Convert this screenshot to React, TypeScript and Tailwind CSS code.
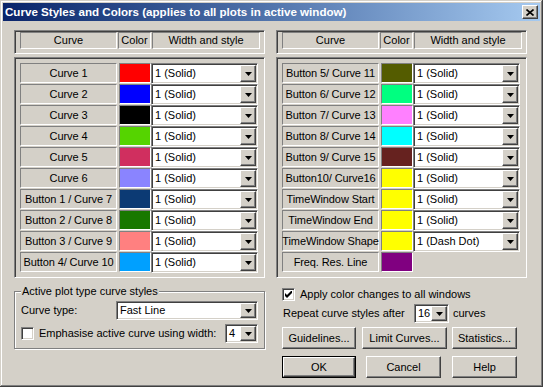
import React from 'react';

const sunken2 =
  'border border-t-[#808080] border-l-[#808080] border-b-white border-r-white shadow-[inset_1px_1px_0_#404040,inset_-1px_-1px_0_#d4d0c8]';
const sunken1 = 'border border-t-[#808080] border-l-[#808080] border-b-white border-r-white';
const raised =
  'border border-t-white border-l-white border-b-[#404040] border-r-[#404040] shadow-[inset_-1px_-1px_0_#808080,inset_1px_1px_0_#d4d0c8]';

type Row = { label: string; color: string; style?: string };

const leftRows: Row[] = [
  { label: 'Curve 1', color: '#ff0000', style: '1 (Solid)' },
  { label: 'Curve 2', color: '#0000ff', style: '1 (Solid)' },
  { label: 'Curve 3', color: '#000000', style: '1 (Solid)' },
  { label: 'Curve 4', color: '#55d400', style: '1 (Solid)' },
  { label: 'Curve 5', color: '#d02f5f', style: '1 (Solid)' },
  { label: 'Curve 6', color: '#8a84ff', style: '1 (Solid)' },
  { label: 'Button 1 / Curve 7', color: '#0c3a74', style: '1 (Solid)' },
  { label: 'Button 2 / Curve 8', color: '#187800', style: '1 (Solid)' },
  { label: 'Button 3 / Curve 9', color: '#ff8080', style: '1 (Solid)' },
  { label: 'Button 4/ Curve 10', color: '#00a0ff', style: '1 (Solid)' },
];

const rightRows: Row[] = [
  { label: 'Button 5/ Curve 11', color: '#545c00', style: '1 (Solid)' },
  { label: 'Button 6/ Curve 12', color: '#00ff80', style: '1 (Solid)' },
  { label: 'Button 7/ Curve 13', color: '#ff80ff', style: '1 (Solid)' },
  { label: 'Button 8/ Curve 14', color: '#00ffff', style: '1 (Solid)' },
  { label: 'Button 9/ Curve 15', color: '#66221f', style: '1 (Solid)' },
  { label: 'Button10/ Curve16', color: '#ffff00', style: '1 (Solid)' },
  { label: 'TimeWindow Start', color: '#ffff00', style: '1 (Solid)' },
  { label: 'TimeWindow End', color: '#ffff00', style: '1 (Solid)' },
  { label: 'TimeWindow Shape', color: '#ffff00', style: '1 (Dash Dot)' },
  { label: 'Freq. Res. Line', color: '#800080' },
];

function Arrow() {
  return (
    <svg width="7" height="4" viewBox="0 0 7 4">
      <polygon points="0,0 7,0 3.5,4" fill="#000" />
    </svg>
  );
}

function Combo({ text, className }: { text: string; className: string }) {
  return (
    <div className={`${sunken2} bg-white flex p-[1px] ${className}`}>
      <span className="flex-1 pl-[2px] flex items-center whitespace-nowrap overflow-hidden">{text}</span>
      <div className={`${raised} bg-[#d4d0c8] w-[16px] flex items-center justify-center`}>
        <Arrow />
      </div>
    </div>
  );
}

function Checkbox({ checked }: { checked?: boolean }) {
  return (
    <div className={`${sunken2} bg-white w-[13px] h-[13px] flex items-center justify-center shrink-0`}>
      {checked && (
        <svg width="7" height="7" viewBox="0 0 7 7">
          <polygon points="0,2 2,4 7,-1 7,2 2,7 0,5" fill="#000" />
        </svg>
      )}
    </div>
  );
}

function Button({ label, className, isDefault }: { label: string; className: string; isDefault?: boolean }) {
  if (isDefault) {
    return (
      <div className={`border border-black flex ${className}`}>
        <div className={`${raised} flex-1 flex items-center justify-center`}>{label}</div>
      </div>
    );
  }
  return <div className={`${raised} flex items-center justify-center ${className}`}>{label}</div>;
}

function HeaderPanel() {
  return (
    <div className={`${sunken2} h-[24px] flex gap-[1px] pl-[5px] pt-[1px]`}>
      <div className={`${sunken1} w-[97px] h-[17px] flex items-center justify-center`}>Curve</div>
      <div className={`${sunken1} w-[33px] h-[17px] flex items-center justify-center`}>Color</div>
      <div className={`${sunken1} w-[108px] h-[17px] flex items-center justify-center`}>Width and style</div>
    </div>
  );
}

function DataPanel({ rows }: { rows: Row[] }) {
  return (
    <div className={`${sunken2} mt-[3px] h-[221px] pl-[5px] pt-[5px] flex flex-col`}>
      {rows.map((r) => (
        <div key={r.label} className="h-[21px] flex">
          <div className={`${sunken1} w-[97px] h-[20px] flex items-center justify-center whitespace-nowrap tracking-[-0.1px]`}>
            {r.label}
          </div>
          <div className={`${sunken1} ml-[2px] w-[32px] h-[20px]`} style={{ background: r.color }} />
          {r.style && <Combo text={r.style} className="w-[107px] h-[21px]" />}
        </div>
      ))}
    </div>
  );
}

export default function App() {
  return (
    <div
      className="w-[543px] h-[387px] bg-[#d4d0c8] p-[3px] text-[11px] text-black font-['Liberation_Sans',Arial,sans-serif] shadow-[inset_-1px_-1px_0_#404040,inset_1px_1px_0_#d4d0c8,inset_-2px_-2px_0_#808080,inset_2px_2px_0_#ffffff] select-none"
    >
      {/* Title bar */}
      <div className="h-[18px] flex items-center bg-linear-to-r from-[#0a246a] to-[#a6caf0] pl-[2px] pr-[2px]">
        <span className="text-white font-bold text-[11.6px] flex-1 whitespace-nowrap">
          Curve Styles and Colors (applies to all plots in active window)
        </span>
        <div className={`${raised} bg-[#d4d0c8] w-[16px] h-[14px] flex items-center justify-center`}>
          <svg width="8" height="7" viewBox="0 0 8 7">
            <path d="M0.5 0.5 L7.5 6.5 M7.5 0.5 L0.5 6.5" stroke="#000" strokeWidth="1.6" />
          </svg>
        </div>
      </div>

      <div className="flex gap-[11px] px-[11px] mt-[9px]">
        {/* Left column */}
        <div className="w-[251px] flex flex-col">
          <HeaderPanel />
          <DataPanel rows={leftRows} />

          <div className="relative mt-[13px] border border-[#808080] shadow-[inset_1px_1px_0_#fff,1px_1px_0_#fff] pt-[9px] pb-[5px] px-[6px] flex flex-col">
            <span className="absolute -top-[7px] left-[6px] px-[1px] bg-[#d4d0c8] leading-[13px]">
              Active plot type curve styles
            </span>
            <div className="h-[19px] flex items-center">
              <span>Curve type:</span>
              <Combo text="Fast Line" className="ml-auto w-[142px] h-[19px]" />
            </div>
            <div className="h-[19px] mt-[4px] flex items-center">
              <Checkbox />
              <span className="ml-[5px] whitespace-nowrap">Emphasise active curve using width:</span>
              <Combo text="4" className="ml-auto w-[33px] h-[19px]" />
            </div>
          </div>
        </div>

        {/* Right column */}
        <div className="w-[251px] flex flex-col">
          <HeaderPanel />
          <DataPanel rows={rightRows} />

          <div className="mt-[10px] h-[13px] flex items-center pl-[6px]">
            <Checkbox checked />
            <span className="ml-[5px]">Apply color changes to all windows</span>
          </div>
          <div className="mt-[3px] h-[19px] flex items-center pl-[7px]">
            <span className="w-[131px] whitespace-nowrap">Repeat curve styles after</span>
            <Combo text="16" className="w-[35px] h-[19px]" />
            <span className="ml-[4px]">curves</span>
          </div>
          <div className="mt-[4px] flex pl-[6px]">
            <Button label="Guidelines..." className="w-[74px] h-[22px]" />
            <Button label="Limit Curves..." className="ml-[6px] w-[85px] h-[22px]" />
            <Button label="Statistics..." className="ml-[5px] w-[65px] h-[22px]" />
          </div>
          <div className="mt-[7px] flex pl-[6px]">
            <Button label="OK" isDefault className="w-[74px] h-[22px]" />
            <Button label="Cancel" className="ml-[10px] w-[75px] h-[22px]" />
            <Button label="Help" className="ml-[11px] w-[65px] h-[22px]" />
          </div>
        </div>
      </div>
    </div>
  );
}
